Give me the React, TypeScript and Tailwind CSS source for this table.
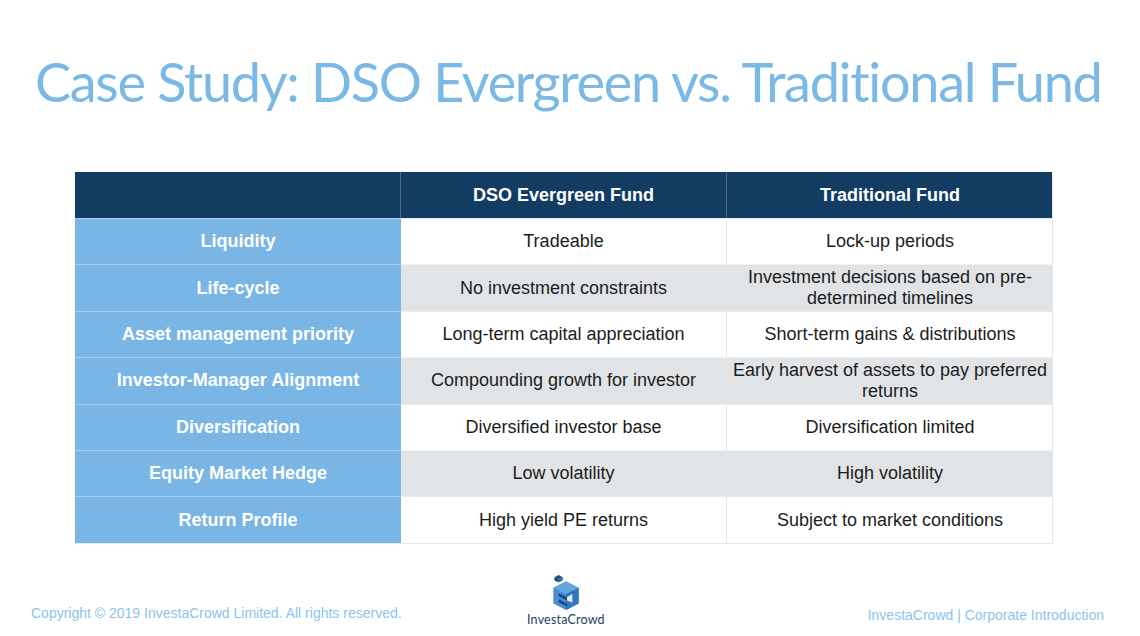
const ROWS: { label: string; dso: string; trad: string }[] = [
  { label: "Liquidity", dso: "Tradeable", trad: "Lock-up periods" },
  { label: "Life-cycle", dso: "No investment constraints", trad: "Investment decisions based on pre-determined timelines" },
  { label: "Asset management priority", dso: "Long-term capital appreciation", trad: "Short-term gains & distributions" },
  { label: "Investor-Manager Alignment", dso: "Compounding growth for investor", trad: "Early harvest of assets to pay preferred returns" },
  { label: "Diversification", dso: "Diversified investor base", trad: "Diversification limited" },
  { label: "Equity Market Hedge", dso: "Low volatility", trad: "High volatility" },
  { label: "Return Profile", dso: "High yield PE returns", trad: "Subject to market conditions" },
];

function Logo() {
  return (
    <div className="flex flex-col items-center">
      <svg width="34" height="38" viewBox="0 0 32 36">
        {/* small navy block on top */}
        <polygon points="5,3 9,1 13,3 9,5" fill="#1e4f86" />
        <polygon points="5,3 9,5 9,8 5,6" fill="#163b66" />
        <polygon points="9,5 13,3 13,6 9,8" fill="#2b65a3" />
        {/* cube */}
        <polygon points="16,7 28,13 28,28 16,34 4,28 4,13" fill="#4a8fd2" />
        <polygon points="16,7 28,13 16,19 4,13" fill="#64a7e0" />
        <polygon points="16,19 28,13 28,28 16,34" fill="#3577ba" />
        {/* inner shape */}
        <polygon points="9,18 17,22 17,25 9,21" fill="#1c4a80" />
        <polygon points="9,24 17,28 17,31 9,27" fill="#1c4a80" />
        <polygon points="17,22 22,19 22,27 17,25" fill="#ffffff" opacity="0.85" />
      </svg>
      <div className="mt-[2px] text-[12.5px] leading-none text-[#1f3c64] font-['Lato',sans-serif] tracking-[0.2px]">
        InvestaCrowd
      </div>
    </div>
  );
}

export default function App() {
  return (
    <div className="w-[1140px] h-[636px] bg-white relative overflow-hidden font-['Liberation_Sans',Arial,sans-serif]">
      <h1 className="pt-[47px] pl-[35px] text-[#7ab8e6] text-[54px] leading-[70px] font-['Lato',sans-serif] font-normal tracking-[-1.3px] whitespace-nowrap">
        Case Study: DSO Evergreen vs. Traditional Fund
      </h1>

      <div className="ml-[75px] mt-[55px] w-[978px] border-b border-r border-[#e6e8ea]">
        <div className="grid grid-cols-[326px_326px_326px] h-[46px] bg-[#133c63] text-white font-bold text-[18px]">
          <div className="border-r border-[#4d6a88]" />
          <div className="flex items-center justify-center border-r border-[#4d6a88]">DSO Evergreen Fund</div>
          <div className="flex items-center justify-center">Traditional Fund</div>
        </div>
        {ROWS.map((r, i) => (
          <div
            key={r.label}
            className={`grid grid-cols-[326px_326px_326px] h-[46.4px] border-t ${
              i % 2 === 1 ? "bg-[#e1e4e7] border-[#f0f2f4]" : "bg-white border-[#e8eaec]"
            }`}
          >
            <div className="flex items-center justify-center bg-[#79b6e5] text-white font-bold text-[18px] border-t border-[#a9cfee] -mt-px">
              {r.label}
            </div>
            <div className="flex items-center justify-center text-center text-[18px] text-[#1c1c1c] border-r border-[#e3e5e8] px-2 leading-[21px]">
              {r.dso}
            </div>
            <div className="flex items-center justify-center text-center text-[18px] text-[#1c1c1c] px-1 leading-[21px]">
              {r.trad}
            </div>
          </div>
        ))}
      </div>

      <div className="absolute left-0 right-0 bottom-[10px] flex items-end justify-between px-[31px]">
        <div className="text-[14px] text-[#8cc3ec] pb-[2px]">
          Copyright © 2019 InvestaCrowd Limited. All rights reserved.
        </div>
        <div className="absolute left-[527px] bottom-0">
          <Logo />
        </div>
        <div className="text-[14px] text-[#8cc3ec] pb-0 pr-[5px]">
          InvestaCrowd | Corporate Introduction
        </div>
      </div>
    </div>
  );
}
